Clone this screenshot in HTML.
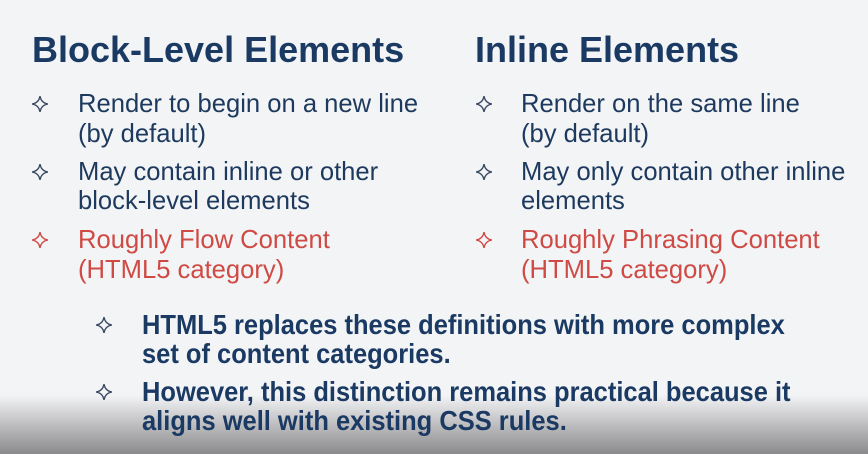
<!DOCTYPE html>
<html><head><meta charset="utf-8"><style>
html,body{margin:0;padding:0}
body{width:868px;height:454px;overflow:hidden;position:relative;background:#f3f4f6;font-family:"Liberation Sans",Arial,sans-serif;color:#1d3a5e}
.l{position:absolute;white-space:nowrap;line-height:30px;font-size:25.6px}
.t{font-size:36px;font-weight:bold;color:#1b3a63;line-height:36px}
.r{color:#cf4a44}
.b{font-weight:bold;font-size:28px;transform:scaleX(0.91);transform-origin:left center;color:#1b3a63}
svg.s{position:absolute;width:18px;height:18px}
.g{position:absolute;left:0;right:0;top:395px;height:59px;background:linear-gradient(#f3f4f6,#c9c9cb 40%,#8a8a8c)}
</style></head><body>
<div class="g"></div>
<div class="l t" style="left:32px;top:32px">Block-Level Elements</div>
<div class="l t" style="left:475px;top:32px">Inline Elements</div>

<svg class="s" style="left:31px;top:95px" viewBox="0 0 16 16"><path d="M8 1 Q9 7 15 8 Q9 9 8 15 Q7 9 1 8 Q7 7 8 1Z" fill="none" stroke="#3a4a60" stroke-width="1.2"/></svg>
<div class="l" style="left:78px;top:89px">Render to begin on a new line</div>
<div class="l" style="left:78px;top:119px">(by default)</div>
<svg class="s" style="left:31px;top:163px" viewBox="0 0 16 16"><path d="M8 1 Q9 7 15 8 Q9 9 8 15 Q7 9 1 8 Q7 7 8 1Z" fill="none" stroke="#3a4a60" stroke-width="1.2"/></svg>
<div class="l" style="left:78px;top:157px">May contain inline or other</div>
<div class="l" style="left:78px;top:186px">block-level elements</div>
<svg class="s" style="left:31px;top:231px" viewBox="0 0 16 16"><path d="M8 1 Q9 7 15 8 Q9 9 8 15 Q7 9 1 8 Q7 7 8 1Z" fill="none" stroke="#cf4a44" stroke-width="1.2"/></svg>
<div class="l r" style="left:78px;top:225px">Roughly Flow Content</div>
<div class="l r" style="left:78px;top:255px">(HTML5 category)</div>

<svg class="s" style="left:475px;top:95px" viewBox="0 0 16 16"><path d="M8 1 Q9 7 15 8 Q9 9 8 15 Q7 9 1 8 Q7 7 8 1Z" fill="none" stroke="#3a4a60" stroke-width="1.2"/></svg>
<div class="l" style="left:521px;top:89px">Render on the same line</div>
<div class="l" style="left:521px;top:119px">(by default)</div>
<svg class="s" style="left:475px;top:163px" viewBox="0 0 16 16"><path d="M8 1 Q9 7 15 8 Q9 9 8 15 Q7 9 1 8 Q7 7 8 1Z" fill="none" stroke="#3a4a60" stroke-width="1.2"/></svg>
<div class="l" style="left:521px;top:157px">May only contain other inline</div>
<div class="l" style="left:521px;top:186px">elements</div>
<svg class="s" style="left:475px;top:231px" viewBox="0 0 16 16"><path d="M8 1 Q9 7 15 8 Q9 9 8 15 Q7 9 1 8 Q7 7 8 1Z" fill="none" stroke="#cf4a44" stroke-width="1.2"/></svg>
<div class="l r" style="left:521px;top:225px">Roughly Phrasing Content</div>
<div class="l r" style="left:521px;top:255px">(HTML5 category)</div>

<svg class="s" style="left:95px;top:316px" viewBox="0 0 16 16"><path d="M8 1 Q9 7 15 8 Q9 9 8 15 Q7 9 1 8 Q7 7 8 1Z" fill="none" stroke="#3a4a60" stroke-width="1.2"/></svg>
<div class="l b" style="left:142px;top:310px">HTML5 replaces these definitions with more complex</div>
<div class="l b" style="left:142px;top:339px">set of content categories.</div>
<svg class="s" style="left:95px;top:383px" viewBox="0 0 16 16"><path d="M8 1 Q9 7 15 8 Q9 9 8 15 Q7 9 1 8 Q7 7 8 1Z" fill="none" stroke="#3a4a60" stroke-width="1.2"/></svg>
<div class="l b" style="left:142px;top:377px">However, this distinction remains practical because it</div>
<div class="l b" style="left:142px;top:406px">aligns well with existing CSS rules.</div>
</body></html>
